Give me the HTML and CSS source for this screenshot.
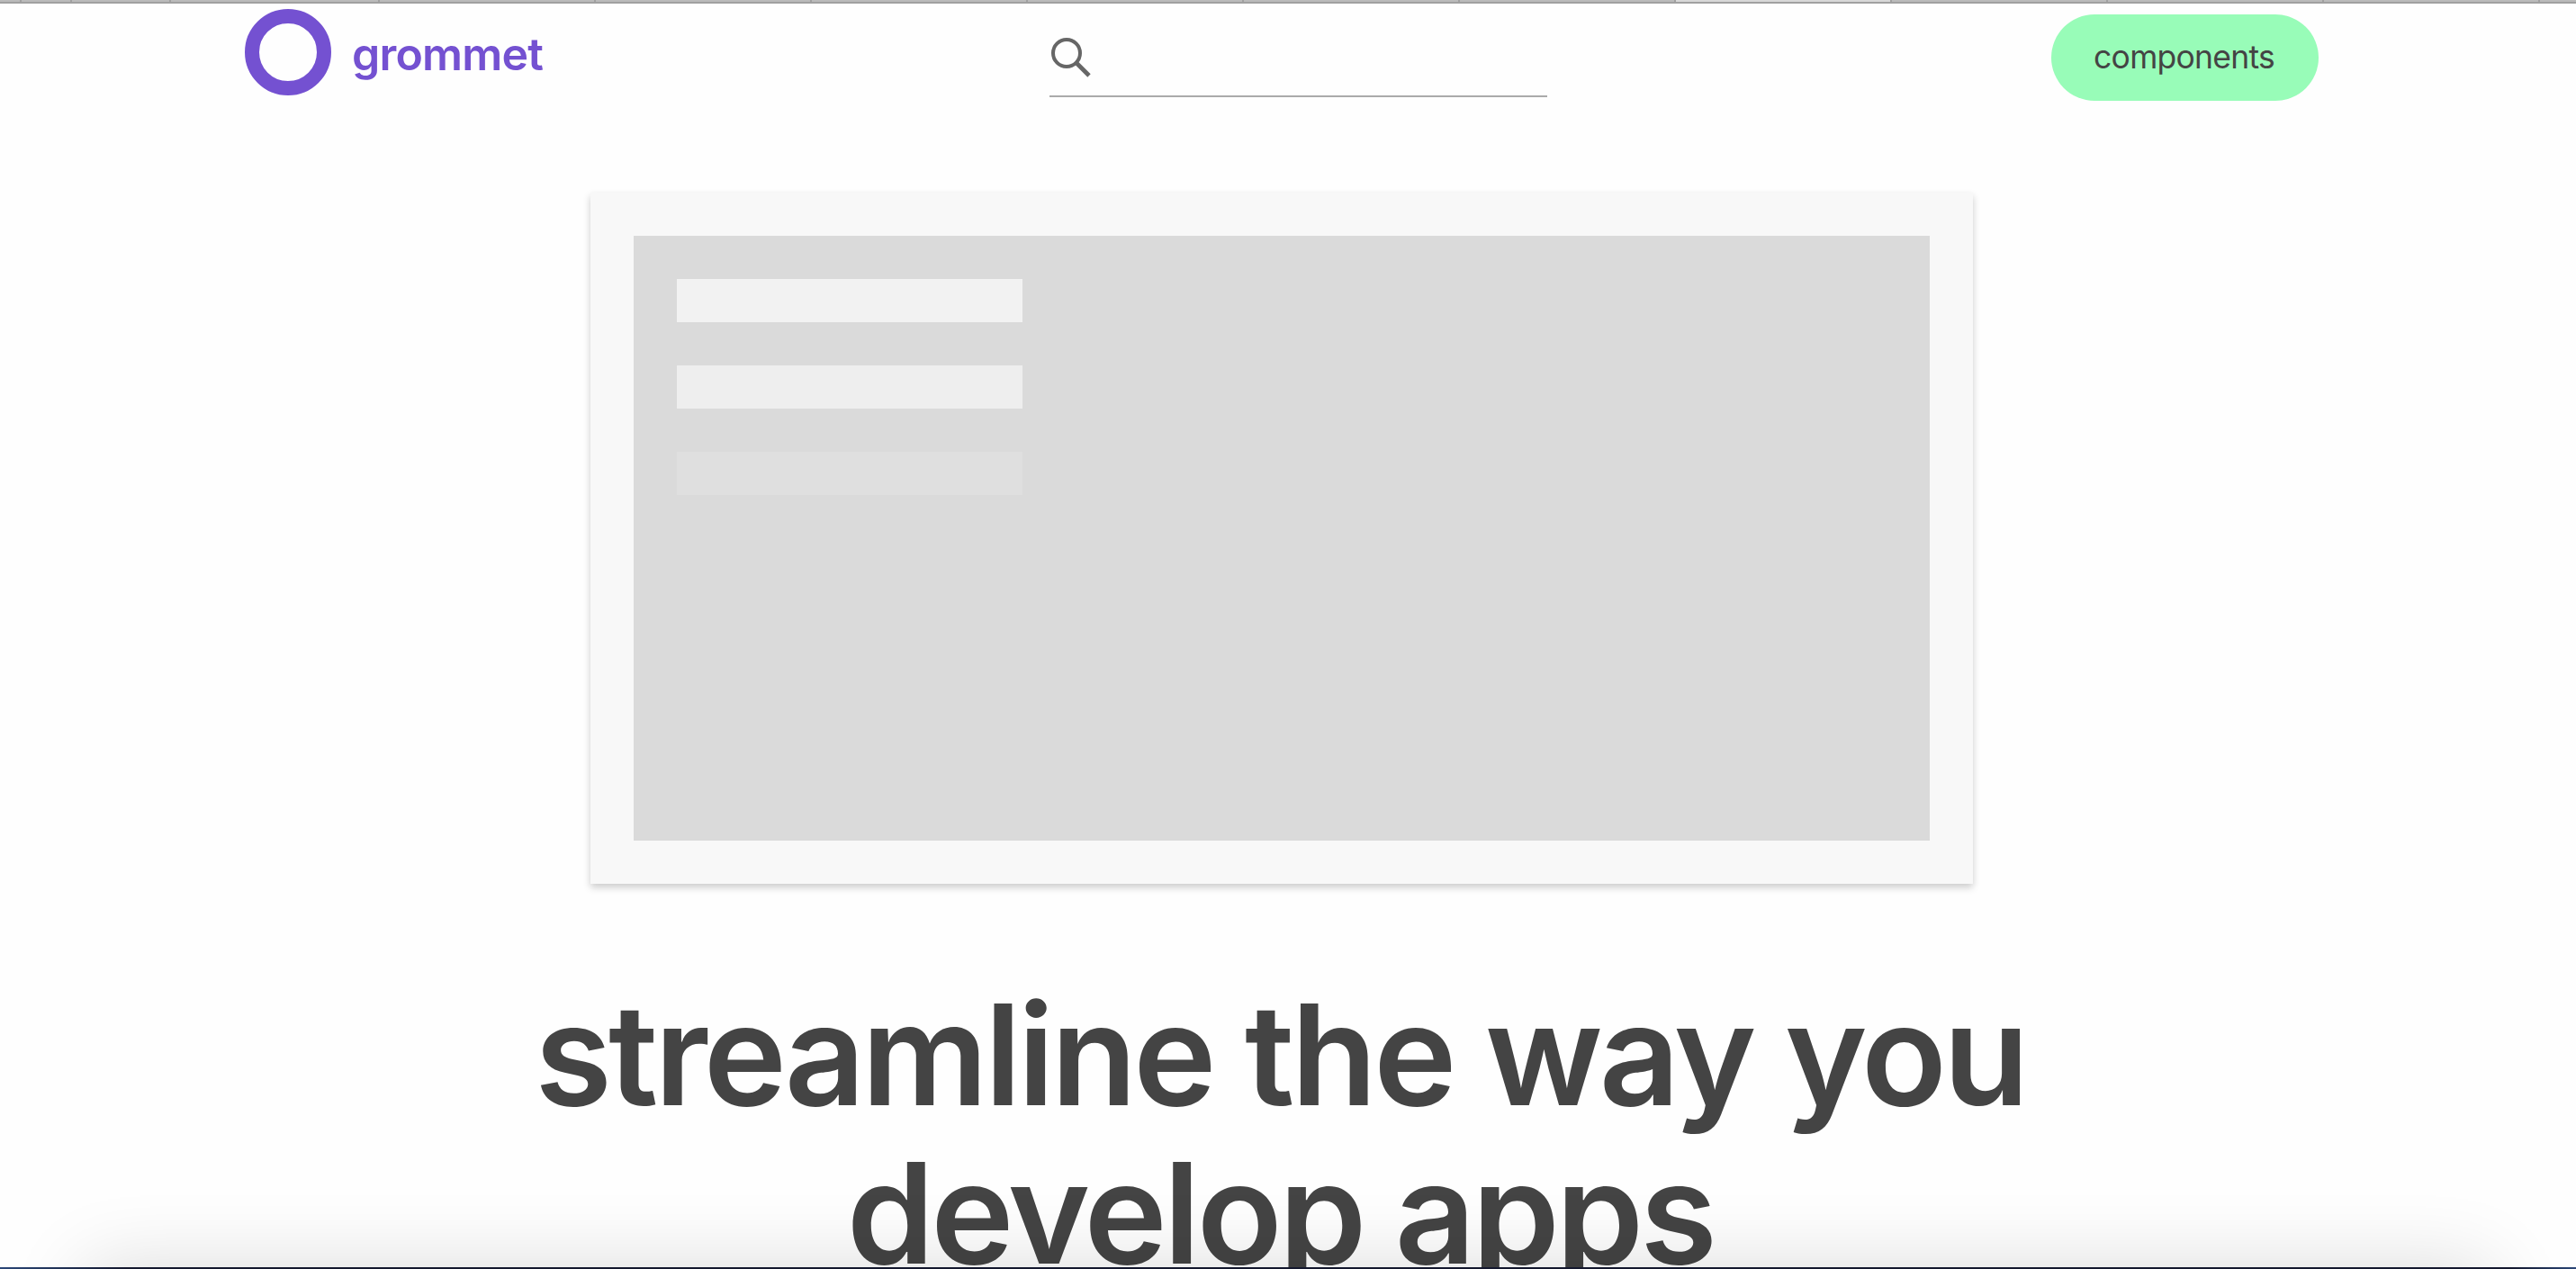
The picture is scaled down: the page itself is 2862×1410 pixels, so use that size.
FILE: index.html
```html
<!DOCTYPE html>
<html lang="en">
<head>
<meta charset="utf-8">
<title>grommet</title>
<link rel="stylesheet" href="styles.css">
</head>
<body>
<div class="window">
  <div class="tabs">
    <i class="tab tab-first"></i><i class="tab tab-icon"></i><i class="tab tab-pinned"></i><i class="tab tab-short"></i>
    <i class="tab"></i><i class="tab"></i><i class="tab"></i><i class="tab"></i><i class="tab"></i><i class="tab"></i>
    <i class="tab tab-active"></i><i class="tab"></i><i class="tab"></i><i class="tab"></i><i class="tab tab-last"></i>
  </div>
  <header class="header">
    <a class="brand"><span class="logo"></span><span class="brand-name">grommet</span></a>
    <div class="search">
      <svg class="search-icon" viewBox="0 0 48 48" fill="none" stroke="#666"><circle cx="19" cy="19" r="15" stroke-width="4"/><path d="M29.5 29.5 L44 44" stroke-width="4.8"/></svg>
    </div>
    <a class="button">components</a>
  </header>
  <main class="main">
    <div class="card">
      <div class="panel">
        <div class="bar bar-one"></div>
        <div class="bar bar-two"></div>
        <div class="bar bar-three"></div>
      </div>
    </div>
    <h1 class="headline"><span class="line line-one">streamline the way you</span><span class="line line-two">develop apps</span></h1>
  </main>
  <div class="dock-shadow"></div>
  <div class="desktop"></div>
</div>
</body>
</html>
```
FILE: styles.css
```css
* { box-sizing: border-box; }
body { margin: 0; background: #fefefe; color: #444; font-family: Inter, "Liberation Sans", sans-serif; }
.window { position: relative; height: 1410px; overflow: hidden; }
.tabs { display: flex; height: 4px; background: #bababa; border-bottom: 2px solid #a0a0a0; }
.tab { flex: 0 0 240px; height: 2px; border-left: 2px solid #a0a0a0; }
.tab-first { flex-basis: 22px; border-left: 0; }
.tab-icon { flex-basis: 56px; }
.tab-pinned { flex-basis: 110px; }
.tab-short { flex-basis: 232px; }
.tab-active { background: #d8d8d8; }
.tab-last { flex: 1; }
.header { display: grid; grid-template-columns: 894px 1fr 297px; height: 108px; padding: 0 286px 0 272px; }
.brand { display: flex; align-items: flex-start; gap: 23px; padding-top: 6px; color: #7451d1; }
.logo { width: 96px; height: 96px; border: 16px solid #7451d1; border-radius: 50%; }
.brand-name { font-size: 50px; font-weight: 620; line-height: 100px; letter-spacing: -.8px; }
.search { width: 553px; height: 104px; padding-top: 36px; border-bottom: 2px solid #aaa; }
.search-icon { display: block; width: 48px; height: 48px; }
.button { height: 96px; margin-top: 12px; padding-right: 2px; border-radius: 48px; background: #98fcb8; font-size: 35.5px; line-height: 96px; letter-spacing: -.75px; text-align: center; }
.main { display: flex; flex-direction: column; align-items: center; padding: 102px 14px 0 0; }
.card { width: 1536px; height: 768px; padding: 48px; background: #f8f8f8; box-shadow: 0 4px 8px rgba(0, 0, 0, .2); }
.panel { display: flex; flex-direction: column; gap: 48px; height: 672px; padding: 48px; background: #dadada; }
.bar { width: 384px; height: 48px; }
.bar-one { background: #f2f2f2; }
.bar-two { background: #eee; }
.bar-three { background: #dfdfdf; }
.headline { margin: 102px 0 0; padding-right: 3px; font-size: 156px; font-weight: 620; line-height: 176px; letter-spacing: -3.9px; text-align: center; white-space: nowrap; }
.line { display: block; }
.dock-shadow { position: absolute; left: 95px; right: 95px; top: 1408px; height: 300px; box-shadow: 0 0 82px rgba(0, 0, 0, .14); pointer-events: none; }
.desktop { position: absolute; left: 0; right: 0; top: 1408px; height: 2px; background: linear-gradient(90deg, #2b4778 0, #14182e 140px, #14182e 2790px, #2b4778 100%); }
```
